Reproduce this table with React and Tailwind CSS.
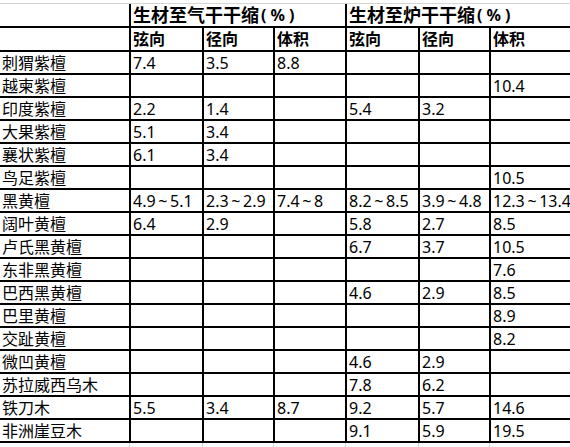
const rows = [
  ['刺猬紫檀', '7.4', '3.5', '8.8', '', '', ''],
  ['越柬紫檀', '', '', '', '', '', '10.4'],
  ['印度紫檀', '2.2', '1.4', '', '5.4', '3.2', ''],
  ['大果紫檀', '5.1', '3.4', '', '', '', ''],
  ['襄状紫檀', '6.1', '3.4', '', '', '', ''],
  ['鸟足紫檀', '', '', '', '', '', '10.5'],
  ['黑黄檀', '4.9\u2009~\u20095.1', '2.3\u2009~\u20092.9', '7.4\u2009~\u20098', '8.2\u2009~\u20098.5', '3.9\u2009~\u20094.8', '12.3\u2009~\u200913.4'],
  ['阔叶黄檀', '6.4', '2.9', '', '5.8', '2.7', '8.5'],
  ['卢氏黑黄檀', '', '', '', '6.7', '3.7', '10.5'],
  ['东非黑黄檀', '', '', '', '', '', '7.6'],
  ['巴西黑黄檀', '', '', '', '4.6', '2.9', '8.5'],
  ['巴里黄檀', '', '', '', '', '', '8.9'],
  ['交趾黄檀', '', '', '', '', '', '8.2'],
  ['微凹黄檀', '', '', '', '4.6', '2.9', ''],
  ['苏拉威西乌木', '', '', '', '7.8', '6.2', ''],
  ['铁刀木', '5.5', '3.4', '8.7', '9.2', '5.7', '14.6'],
  ['非洲崖豆木', '', '', '', '9.1', '5.9', '19.5'],
]

const cols = 'grid grid-cols-[129px_73px_71px_72px_73px_71px_1fr]'

function Cell({ children, first, bold, className = '' }) {
  return (
    <div
      className={`flex items-center h-full pl-[2px] whitespace-nowrap overflow-hidden border-b-2 border-black ${first ? '' : 'border-l-2'} ${bold ? 'font-bold' : ''} ${className}`}
    >
      {children}
    </div>
  )
}

function GroupTitle({ text }) {
  return (
    <div className="col-span-3 flex items-center h-full pl-[2px] border-b-2 border-l-2 border-black font-bold whitespace-nowrap">
      <span className="text-[18px]">{text}</span>
      <span className="ml-[2px]">(</span>
      <span className="mx-[4px]">%</span>
      <span>)</span>
    </div>
  )
}

export default function App() {
  return (
    <div
      className="w-[570px] h-[447px] overflow-hidden bg-white text-black text-[16px] leading-none pt-[3px]"
      style={{ fontFamily: '"Noto Sans", "Noto Sans CJK SC", sans-serif' }}
    >
      {/* header row 1 */}
      <div className={`${cols} h-[25px] border-t border-[#d6d6d6]`}>
        <Cell first />
        <GroupTitle text="生材至气干干缩" />
        <GroupTitle text="生材至炉干干缩" />
      </div>
      {/* header row 2 */}
      <div className={`${cols} h-[24px]`}>
        <Cell first />
        <Cell bold>弦向</Cell>
        <Cell bold>径向</Cell>
        <Cell bold>体积</Cell>
        <Cell bold>弦向</Cell>
        <Cell bold>径向</Cell>
        <Cell bold>体积</Cell>
      </div>
      {rows.map((r) => (
        <div key={r[0]} className={`${cols} h-[23px]`}>
          {r.map((v, i) => (
            <Cell key={i} first={i === 0}>
              {v}
            </Cell>
          ))}
        </div>
      ))}
      {/* faint sheet gridlines below the table */}
      <div className={`${cols} h-[6px]`}>
        {[0, 1, 2, 3, 4, 5, 6].map((i) => (
          <div key={i} className={i === 0 ? '' : 'border-l border-[#d6d6d6]'} />
        ))}
      </div>
    </div>
  )
}
